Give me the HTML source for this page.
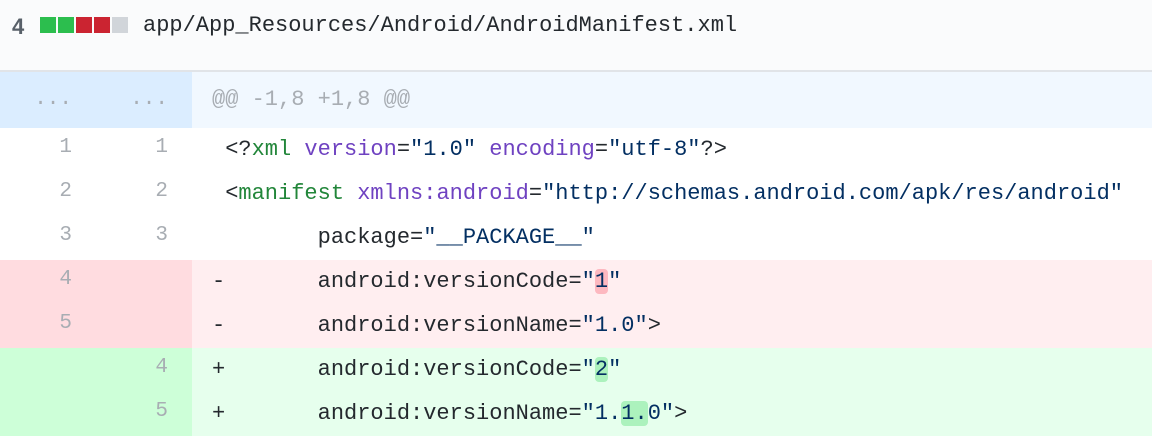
<!DOCTYPE html>
<html><head><meta charset="utf-8"><style>
*{margin:0;padding:0;box-sizing:border-box}
body{width:1152px;height:432px;overflow:hidden;background:#fff;font-family:"Liberation Mono",monospace;font-size:22px;color:#24292e}
.hdr{height:72px;background:#fafbfc;border-bottom:2px solid #e1e4e8;position:relative}
.cnt{position:absolute;left:12px;top:14px;font-family:"Liberation Sans",sans-serif;font-weight:bold;font-size:22px;color:#586069}
.sq{position:absolute;top:17px;width:16px;height:16px}
.path{position:absolute;left:143px;top:12px;font-size:22px;line-height:28px}
.row{height:44px;position:relative;white-space:pre;line-height:44px}
.n1,.n2{position:absolute;top:0;height:100%;width:96px;text-align:right;color:#a8adb3;padding-right:24px;line-height:40px;font-size:21px}
.n1{left:0}.n2{left:96px}
.c{position:absolute;left:192px;right:0;top:0;height:100%;padding-left:20px}
.hunk{height:56px}.hunk .n1,.hunk .n2{background:#dbedff;line-height:56px;color:#a8adb3}.hunk .c{background:#f1f8ff;line-height:56px;color:#a8adb3}
.del .n1,.del .n2{background:#ffdce0}.del .c{background:#ffeef0}
.add .n1,.add .n2{background:#cdffd8}.add .c{background:#e6ffed}
.t{color:#22863a}.a{color:#6f42c1}.s{color:#032f62}
.hd{background:#fdb8c0;border-radius:4px}.ha{background:#acf2bd;border-radius:4px}
</style></head><body>
<div class="hdr">
<div class="cnt">4</div>
<div class="sq" style="left:40px;background:#2cbe4e"></div>
<div class="sq" style="left:58px;background:#2cbe4e"></div>
<div class="sq" style="left:76px;background:#cb2431"></div>
<div class="sq" style="left:94px;background:#cb2431"></div>
<div class="sq" style="left:112px;background:#d1d5da"></div>
<div class="path">app/App_Resources/Android/AndroidManifest.xml</div>
</div>
<div class="row hunk"><div class="n1">...</div><div class="n2">...</div><div class="c">@@ -1,8 +1,8 @@</div></div>
<div class="row"><div class="n1">1</div><div class="n2">1</div><div class="c"> &lt;?<span class="t">xml</span> <span class="a">version</span>=<span class="s">"1.0"</span> <span class="a">encoding</span>=<span class="s">"utf-8"</span>?&gt;</div></div>
<div class="row"><div class="n1">2</div><div class="n2">2</div><div class="c"> &lt;<span class="t">manifest</span> <span class="a">xmlns:android</span>=<span class="s">"http://schemas.android.com/apk/res/android"</span></div></div>
<div class="row"><div class="n1">3</div><div class="n2">3</div><div class="c">        package=<span class="s">"__PACKAGE__"</span></div></div>
<div class="row del"><div class="n1">4</div><div class="n2"></div><div class="c">-       android:versionCode=<span class="s">"<span class="hd">1</span>"</span></div></div>
<div class="row del"><div class="n1">5</div><div class="n2"></div><div class="c">-       android:versionName=<span class="s">"1.0"</span>&gt;</div></div>
<div class="row add"><div class="n1"></div><div class="n2">4</div><div class="c">+       android:versionCode=<span class="s">"<span class="ha">2</span>"</span></div></div>
<div class="row add"><div class="n1"></div><div class="n2">5</div><div class="c">+       android:versionName=<span class="s">"1.<span class="ha">1.</span>0"</span>&gt;</div></div>
</body></html>
